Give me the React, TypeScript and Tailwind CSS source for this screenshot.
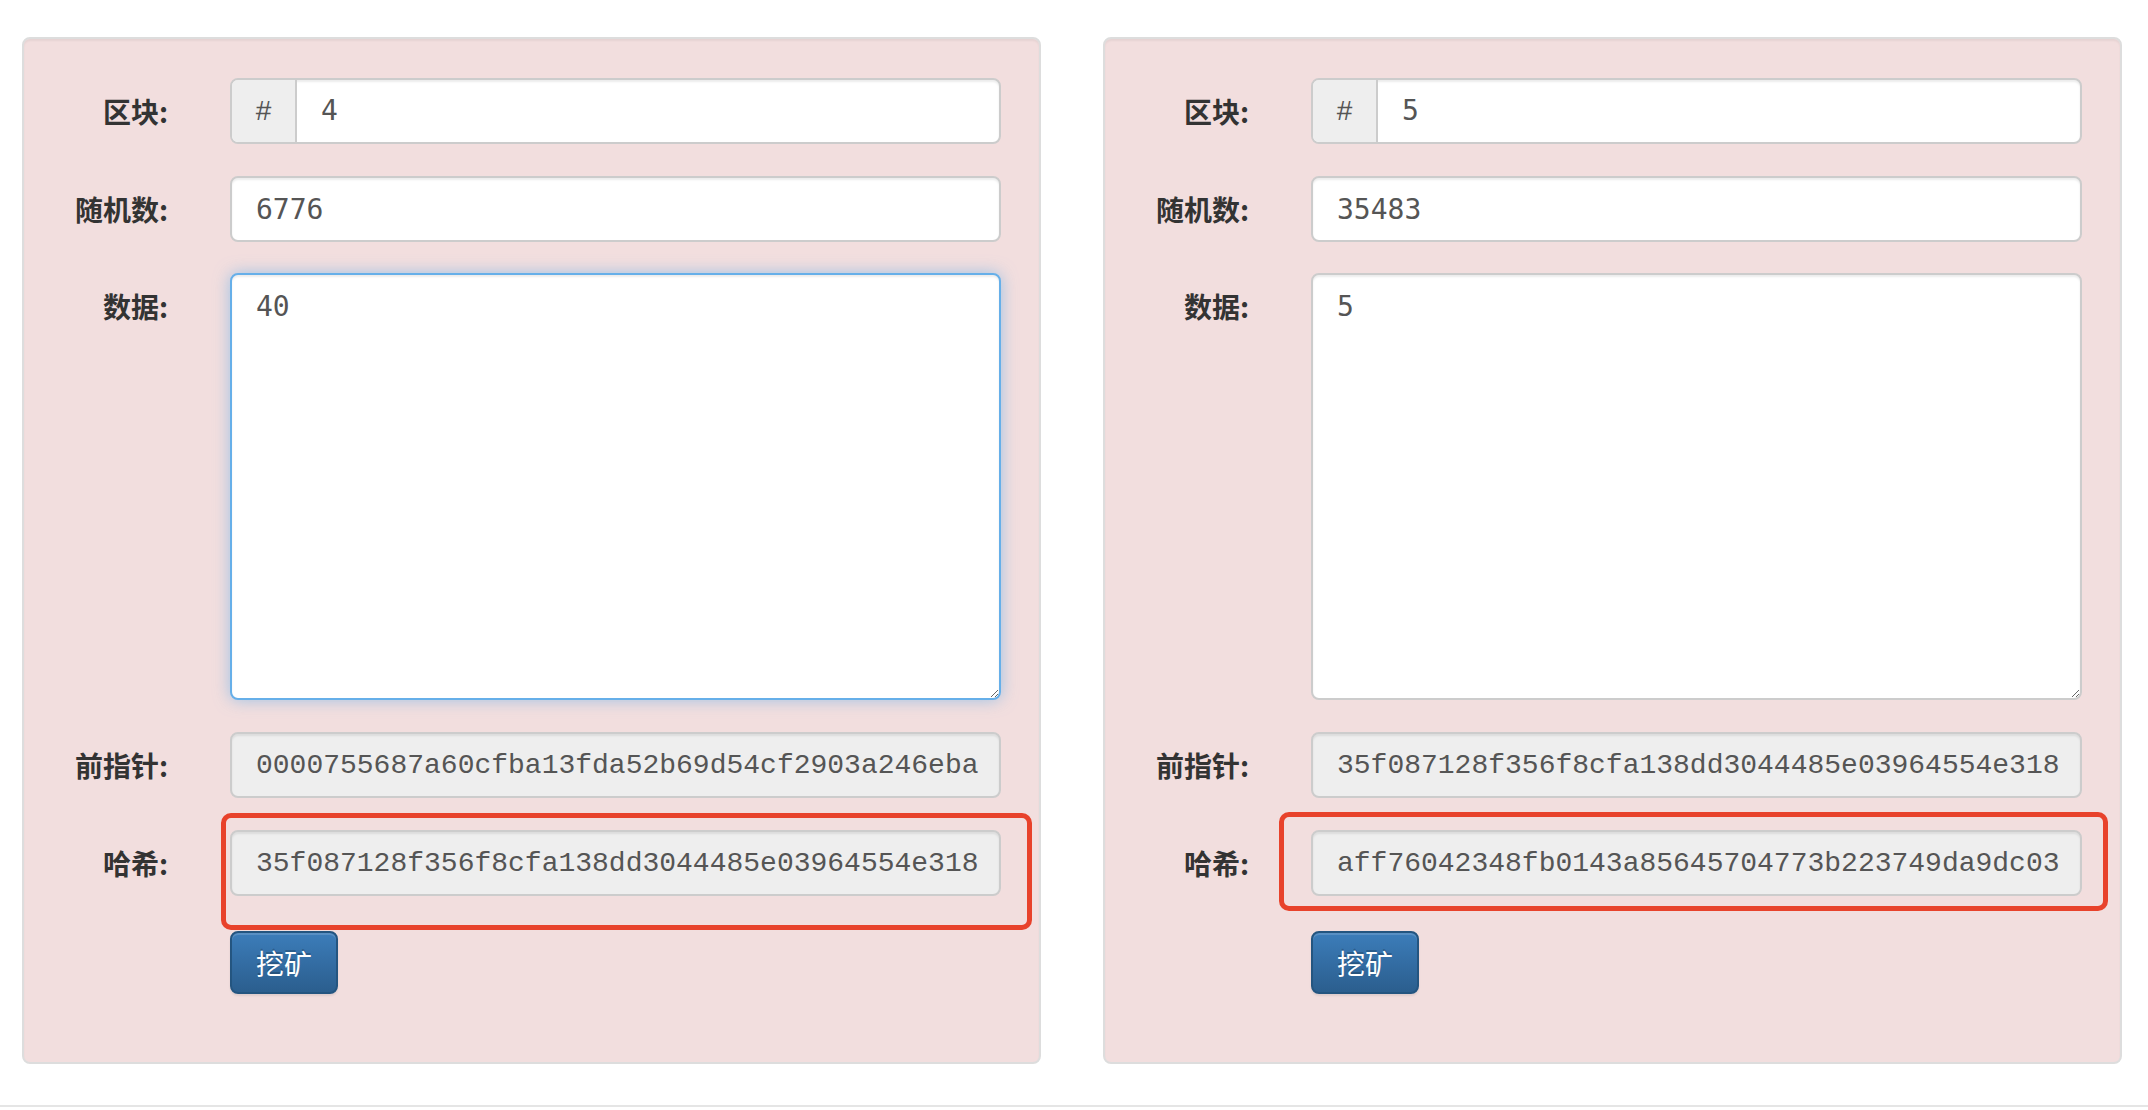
import * as React from "react";

type Block = {
  block: string;
  nonce: string;
  data: string;
  prev: string;
  hash: string;
  focused: boolean;
  boxClass: string;
};

const blocks: Block[] = [
  {
    block: "4",
    nonce: "6776",
    data: "40",
    prev: "0000755687a60cfba13fda52b69d54cf2903a246eba",
    hash: "35f087128f356f8cfa138dd3044485e03964554e318",
    focused: true,
    boxClass: "-top-[17px] -bottom-[34px] -left-[9px] -right-[31px]",
  },
  {
    block: "5",
    nonce: "35483",
    data: "5",
    prev: "35f087128f356f8cfa138dd3044485e03964554e318",
    hash: "aff76042348fb0143a85645704773b223749da9dc03",
    focused: false,
    boxClass: "-top-[18px] -bottom-[15px] -left-[32px] -right-[26px]",
  },
];

const labelCls =
  "w-[106px] shrink-0 text-right pt-[13px] text-[28px] leading-[40px] font-bold text-[#333] [font-family:'Noto_Sans_CJK_SC',sans-serif]";
const inputCls =
  "w-full h-[66px] pl-[24px] rounded-[8px] border-2 border-[#cccccc] text-[28px] text-[#555] outline-none shadow-[inset_0_2px_2px_rgba(0,0,0,0.075)]";
const sansMono = "[font-family:'DejaVu_Sans_Mono',monospace]";
const courier =
  "[font-family:Courier,'Courier_New','Nimbus_Mono_PS','FreeMono','Liberation_Mono',monospace]";

function Row({ label, className, children }: { label: string; className?: string; children: React.ReactNode }) {
  return (
    <div className={"flex items-start " + (className ?? "")}>
      <label className={labelCls}>{label}</label>
      <div className="ml-[62px] flex-1">{children}</div>
    </div>
  );
}

function BlockCard({ b }: { b: Block }) {
  return (
    <div className="w-[1019px] shrink-0 rounded-[8px] border-2 border-[#dddddd] bg-[#f2dede] px-[38px] pt-[39px] pb-[68px] shadow-[inset_0_2px_2px_rgba(0,0,0,0.05)]">
      <Row label="区块:">
        <div className="flex h-[66px] rounded-[8px] border-2 border-[#cccccc] bg-white overflow-hidden shadow-[inset_0_2px_2px_rgba(0,0,0,0.075)]">
          <span className="w-[65px] shrink-0 flex items-center justify-center bg-[#eeeeee] border-r-2 border-[#cccccc] text-[28px] text-[#555] [font-family:'Liberation_Sans',sans-serif]">
            #
          </span>
          <input
            readOnly
            value={b.block}
            className={"flex-1 px-[24px] bg-transparent text-[28px] text-[#555] outline-none " + sansMono}
          />
        </div>
      </Row>

      <Row label="随机数:" className="mt-[32px]">
        <input readOnly value={b.nonce} className={inputCls + " pr-[24px] bg-white " + sansMono} />
      </Row>

      <Row label="数据:" className="mt-[31px]">
        <textarea
          readOnly
          value={b.data}
          className={
            "block w-full h-[427px] px-[24px] py-[12px] rounded-[8px] border-2 text-[28px] leading-[40px] text-[#555] bg-white outline-none " +
            sansMono +
            (b.focused
              ? " border-[#66afe9] shadow-[inset_0_2px_2px_rgba(0,0,0,0.075),0_0_16px_rgba(102,175,233,0.6)]"
              : " border-[#cccccc] shadow-[inset_0_2px_2px_rgba(0,0,0,0.075)]")
          }
        />
      </Row>

      <Row label="前指针:" className="mt-[32px]">
        <input readOnly value={b.prev} className={inputCls + " pr-[16px] bg-[#eeeeee] " + courier} />
      </Row>

      <Row label="哈希:" className="mt-[32px]">
        <div className="relative">
          <input readOnly value={b.hash} className={inputCls + " pr-[16px] bg-[#eeeeee] " + courier} />
          {/* annotation frame drawn over the screenshot */}
          <div className={"absolute rounded-[10px] border-[5px] border-[#e8422b] pointer-events-none " + b.boxClass} />
        </div>
      </Row>

      <div className="mt-[35px] pl-[168px]">
        <button className="h-[63px] px-[24px] rounded-[8px] border-2 border-[#245580] bg-gradient-to-b from-[#3c7dba] to-[#2b5e8e] text-white text-[28px] leading-[40px] [text-shadow:0_-2px_0_rgba(0,0,0,0.2)] shadow-[inset_0_2px_0_rgba(255,255,255,0.15),0_2px_2px_rgba(0,0,0,0.075)] [font-family:'Noto_Sans_CJK_SC',sans-serif]">
          挖矿
        </button>
      </div>
    </div>
  );
}

export default function App() {
  return (
    <div className="min-h-[1110px] bg-white">
      <div className="flex gap-[62px] pl-[22px] pt-[37px]">
        {blocks.map((b, i) => (
          <BlockCard key={i} b={b} />
        ))}
      </div>
      <div className="mt-[41px] h-[2px] bg-[#e5e5e5]" />
    </div>
  );
}
